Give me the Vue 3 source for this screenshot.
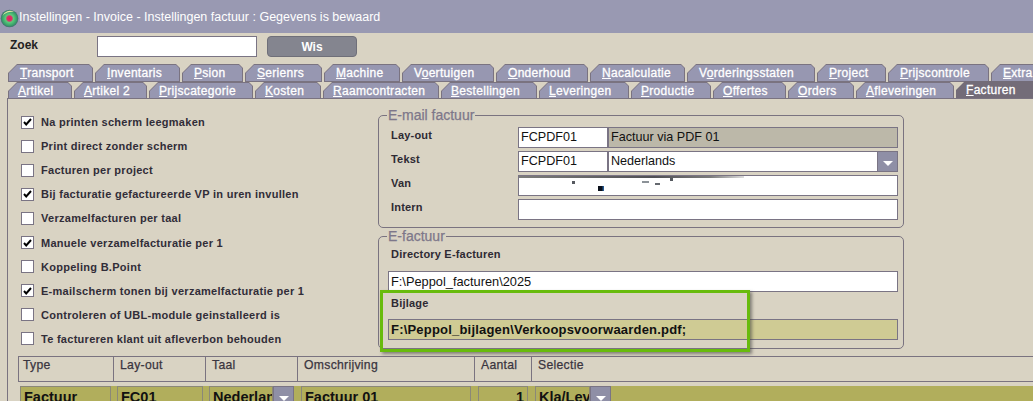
<script setup>
const row1 = [
  { k: 'T', t: 'ransport', w: 87 },
  { k: 'I', t: 'nventaris', w: 87 },
  { k: 'P', t: 'sion', w: 63 },
  { k: 'S', t: 'erienrs', w: 79 },
  { k: 'M', t: 'achine', w: 78 },
  { k: 'Vo', t: 'ertuigen', w: 94, u: 'second' },
  { k: 'O', t: 'nderhoud', w: 94 },
  { k: 'N', t: 'acalculatie', w: 97 },
  { k: 'Vo', t: 'rderingsstaten', w: 130, u: 'second' },
  { k: 'P', t: 'roject', w: 71 },
  { k: 'P', t: 'rijscontrole', w: 103 },
  { k: 'E', t: 'xtra', w: 50 }
]
const row2 = [
  { k: 'A', t: 'rtikel', w: 66 },
  { k: 'A', t: 'rtikel 2', w: 75 },
  { k: 'P', t: 'rijscategorie', w: 106 },
  { k: 'K', t: 'osten', w: 68 },
  { k: 'R', t: 'aamcontracten', w: 118 },
  { k: 'B', t: 'estellingen', w: 98 },
  { k: 'L', t: 'everingen', w: 92 },
  { k: 'P', t: 'roductie', w: 82 },
  { k: 'O', t: 'ffertes', w: 75 },
  { k: 'O', t: 'rders', w: 68 },
  { k: 'A', t: 'fleveringen', w: 100 },
  { k: 'F', t: 'acturen', w: 80, active: true }
]
const checks = [
  ['Na printen scherm leegmaken', true],
  ['Print direct zonder scherm', false],
  ['Facturen per project', false],
  ['Bij facturatie gefactureerde VP in uren invullen', true],
  ['Verzamelfacturen per taal', false],
  ['Manuele verzamelfacturatie per 1', true],
  ['Koppeling B.Point', false],
  ['E-mailscherm tonen bij verzamelfacturatie per 1', true],
  ['Controleren of UBL-module geinstalleerd is', false],
  ['Te factureren klant uit afleverbon behouden', false]
]
const columns = [
  ['Type', 95], ['Lay-out', 92], ['Taal', 92], ['Omschrijving', 177], ['Aantal', 57], ['Selectie', 502]
]
</script>

<template>
  <div class="screen">
    <header class="titlebar">
      <svg class="logo" width="19" height="19" viewBox="0 0 19 19">
        <defs>
          <radialGradient id="orb" cx="50%" cy="50%" r="52%">
            <stop offset="0" stop-color="#e81c58" />
            <stop offset=".28" stop-color="#dc2f68" />
            <stop offset=".42" stop-color="#5ecb7c" />
            <stop offset=".78" stop-color="#38a06a" />
            <stop offset="1" stop-color="#46606e" />
          </radialGradient>
        </defs>
        <circle cx="9.5" cy="9.5" r="8.8" fill="url(#orb)" />
        <path d="M2.5 7 A7.8 7.8 0 0 1 14 3 A10 7 0 0 0 2.5 7Z" fill="#e8e6a8" />
      </svg>
      <span class="title">Instellingen - Invoice - Instellingen factuur : Gegevens is bewaard</span>
    </header>

    <div class="search">
      <span class="search-label">Zoek</span>
      <input class="search-input" type="text" />
      <button class="wis">Wis</button>
    </div>

    <div class="tabs row-one">
      <div v-for="tab in row1" :key="tab.t" class="tab" :style="{ width: tab.w + 'px' }">
        <span v-if="tab.u" class="tab-text">{{ tab.k[0] }}<u>{{ tab.k[1] }}</u>{{ tab.t }}</span>
        <span v-else class="tab-text"><u>{{ tab.k }}</u>{{ tab.t }}</span>
      </div>
    </div>
    <div class="tabs row-two">
      <div v-for="tab in row2" :key="tab.t" class="tab" :class="{ active: tab.active }" :style="{ width: tab.w + 'px' }">
        <span class="tab-text"><u>{{ tab.k }}</u>{{ tab.t }}</span>
      </div>
    </div>

    <main class="panel">
      <div class="top-area">
        <ul class="checks">
          <li v-for="item in checks" :key="item[0]" class="check">
            <span class="box">
              <svg v-if="item[1]" width="9" height="8" viewBox="0 0 9 8">
                <path d="M1 4 L3.2 6.4 L8 1" fill="none" stroke="#000" stroke-width="2" />
              </svg>
            </span>
            <span>{{ item[0] }}</span>
          </li>
        </ul>

        <div class="groups">
          <fieldset class="group mail">
            <legend>E-mail factuur</legend>
            <div class="form-row">
              <label>Lay-out</label>
              <div class="field code">FCPDF01</div>
              <div class="field fill grey">Factuur via PDF 01</div>
            </div>
            <div class="form-row">
              <label>Tekst</label>
              <div class="field code">FCPDF01</div>
              <div class="field fill">Nederlands</div>
              <span class="arrow-btn"><i></i></span>
            </div>
            <div class="form-row">
              <label>Van</label>
              <div class="field fill smeared">
                <span class="smear"></span>
                <span class="spot spot-dark"></span>
                <span class="spot spot-a"></span>
                <span class="spot spot-b"></span>
                <span class="spot spot-c"></span>
                <span class="spot spot-d"></span>
              </div>
            </div>
            <div class="form-row">
              <label>Intern</label>
              <div class="field fill"></div>
            </div>
          </fieldset>

          <fieldset class="group efactuur">
            <legend>E-factuur</legend>
            <label class="stack-label first">Directory E-facturen</label>
            <div class="field wide">F:\Peppol_facturen\2025</div>
            <label class="stack-label second">Bijlage</label>
            <div class="field wide olive">F:\Peppol_bijlagen\Verkoopsvoorwaarden.pdf;</div>
            <div class="highlight"></div>
          </fieldset>
        </div>
      </div>

      <div class="grid-head">
        <div v-for="col in columns" :key="col[0]" class="head-cell" :style="{ width: col[1] + 'px' }">{{ col[0] }}</div>
      </div>
      <div class="grid-row">
        <div class="cell c-type">Factuur</div>
        <div class="cell c-layout">FC01</div>
        <div class="combo c-taal"><div class="cell">Nederlands</div><span class="arrow-btn"><i></i></span></div>
        <div class="cell c-desc">Factuur 01</div>
        <div class="cell c-num">1</div>
        <div class="combo c-sel"><div class="cell">Kla/Lev</div><span class="arrow-btn"><i></i></span></div>
      </div>
    </main>
  </div>
</template>

<style>
html, body { margin: 0; overflow: hidden; background: #d9d3c3; }
</style>

<style scoped>
.screen {
  width: 1033px;
  height: 401px;
  overflow: hidden;
  background: #d9d3c3;
  font-family: "Liberation Sans", Arial, sans-serif;
  color: #2e2a33;
  position: relative;
}
.titlebar {
  height: 33px;
  background: #9999b2;
  display: flex;
  align-items: center;
  box-sizing: border-box;
}
.logo { flex: none; margin-top: 3px; }
.title { color: #fff; font-size: 12.5px; }
.search {
  height: 31px;
  display: flex;
  align-items: flex-start;
  box-sizing: border-box;
  padding: 3px 0 0 10px;
}
.search-label { width: 87px; font-size: 12px; font-weight: bold; line-height: 19px; color: #222; }
.search-input {
  width: 160px;
  height: 21px;
  box-sizing: border-box;
  border: 1px solid #7a7484;
  background: #fff;
  padding: 0;
  margin: 0;
  outline: none;
}
.wis {
  width: 90px;
  height: 21px;
  margin-left: 10px;
  border: 1px solid #6f6f79;
  border-radius: 4px;
  background: #84858f;
  color: #fff;
  font: bold 12px "Liberation Sans", Arial, sans-serif;
  padding: 0;
}
.tabs { display: flex; padding-left: 8px; }
.row-one { height: 18px; }
.row-two { height: 16px; }
.tab {
  position: relative;
  flex: none;
  box-sizing: border-box;
  height: 18px;
  padding-left: 12px;
  background: #7a7380;
  color: #fff;
  font-size: 12px;
  letter-spacing: .3px;
  -webkit-text-stroke: .3px #fff;
  line-height: 19px;
  white-space: nowrap;
  clip-path: polygon(9px 0, calc(100% - 6px) 0, calc(100% - 2px) 4px, calc(100% - 2px) 100%, 0 100%, 0 9px);
}
.tab::before {
  content: "";
  position: absolute;
  inset: 1px 3px 1px 1px;
  background: #9797b1;
  clip-path: polygon(8px 0, calc(100% - 3px) 0, 100% 3px, 100% 100%, 0 100%, 0 8px);
}
.tab-text { position: relative; }
.row-two .tab { height: 16px; line-height: 19px; padding-left: 10px; }
.row-two .tab::before { inset: 1px 3px 0 1px; }
.row-two .tab.active {
  background: #736c78;
  margin-top: -1px;
  height: 17px;
  line-height: 18px;
  clip-path: polygon(9px 0, 100% 0, 100% 100%, 0 100%, 0 9px);
}
.tab.active::before { background: #736c78; }
.panel {
  margin-left: 7px;
  border-left: 1px solid #7a7380;
  border-top: 1px solid #7a7380;
  height: 303px;
  box-sizing: border-box;
}
.top-area { display: flex; height: 257px; }
.checks {
  list-style: none;
  margin: 0;
  padding: 11px 0 0 13px;
  width: 370px;
  box-sizing: border-box;
  flex: none;
}
.check {
  height: 24.1px;
  display: flex;
  align-items: center;
  font-size: 11px;
  font-weight: bold;
  letter-spacing: .28px;
  color: #312d38;
}
.box {
  width: 13px;
  height: 13px;
  flex: none;
  box-sizing: border-box;
  border: 1px solid #7a7484;
  background: #fff;
  margin-right: 7px;
  display: flex;
  align-items: center;
  justify-content: center;
}
.groups { width: 526px; padding-top: 9px; flex: none; }
.group {
  margin: 0;
  padding: 0;
  border: 1px solid #7a7380;
  border-radius: 5px;
  height: 120px;
  box-sizing: border-box;
  position: relative;
  min-width: 0;
}
.group legend {
  padding: 0 1px;
  font-size: 14px;
  line-height: 14px;
  font-weight: normal;
  color: #7d778a;
  -webkit-text-stroke: .25px #7d778a;
}
.mail { margin-bottom: 1px; }
.mail legend { margin-left: 8px; }
.efactuur legend { margin-left: -1px; }
.form-row {
  display: flex;
  height: 21px;
  margin: 0 5px 3px 12px;
}
.form-row:first-of-type { margin-top: 5px; }
.form-row label { width: 127px; flex: none; font-size: 11px; font-weight: bold; letter-spacing: .2px; line-height: 17px; color: #2e2a33; }
.field {
  box-sizing: border-box;
  height: 21px;
  border: 1px solid #7a7484;
  background: #fff;
  font-size: 12.6px;
  line-height: 19px;
  padding-left: 2px;
  color: #111;
  white-space: nowrap;
  overflow: hidden;
}
.code { width: 90px; flex: none; }
.fill { flex: 1; min-width: 0; }
.grey { background: #bcb8a9; }
.smeared { position: relative; }
.smear {
  position: absolute;
  left: 0;
  top: 0;
  width: 225px;
  height: 2px;
  background: linear-gradient(90deg, #7c7c7a, #4f4f54 60%, #7a7a7a 85%, #ddd 100%);
  filter: blur(.5px);
}
.spot { position: absolute; background: #8c9298; filter: blur(.6px); }
.spot-dark { left: 79px; top: 10px; width: 6px; height: 5px; background: linear-gradient(90deg, #0a0f1a 60%, #2a6cb0); }
.spot-a { left: 53px; top: 5px; width: 3px; height: 3px; background: #55595f; }
.spot-b { left: 123px; top: 5px; width: 7px; height: 2px; }
.spot-c { left: 136px; top: 7px; width: 5px; height: 2px; background: #65696f; }
.spot-d { left: 151px; top: 2px; width: 3px; height: 3px; background: #55595f; }
.arrow-btn {
  width: 21px;
  height: 21px;
  flex: none;
  box-sizing: border-box;
  border: 1px solid #7a7484;
  background: #8f8fa6;
  display: flex;
  align-items: center;
  justify-content: center;
}
.arrow-btn i {
  width: 0;
  height: 0;
  border-left: 5px solid transparent;
  border-right: 5px solid transparent;
  border-top: 5px solid #fff;
  margin-top: 3px;
}
.form-row .arrow-btn { margin-left: -1px; }
.efactuur { padding: 0 5px 0 9px; }
.stack-label { display: block; font-size: 11px; font-weight: bold; letter-spacing: .2px; line-height: 13px; color: #2e2a33; padding-left: 3px; }
.stack-label.first { margin-top: 5px; margin-bottom: 10px; }
.stack-label.second { margin-top: 5px; margin-bottom: 9px; }
.wide { width: 510px; font-size: 12.8px; }
.olive { background: #cfcb94; font-size: 13px; font-weight: bold; letter-spacing: .2px; color: #111; }
.highlight {
  position: absolute;
  left: 1px;
  top: 47px;
  width: 370px;
  height: 62px;
  box-sizing: border-box;
  border: 3px solid #68bb0c;
  box-shadow: 2px 2px 3px rgba(60, 60, 60, .55);
}
.grid-head {
  display: flex;
  height: 26px;
  margin-left: 10px;
  box-sizing: border-box;
  border-top: 1px solid #7a7380;
  border-bottom: 1px solid #7a7380;
}
.head-cell {
  box-sizing: border-box;
  border-left: 1px solid #7a7380;
  font-size: 12.2px;
  -webkit-text-stroke: .25px #3a3540;
  padding: 1px 0 0 6px;
  letter-spacing: .3px;
  color: #3a3540;
  flex: none;
}
.head-cell:first-child { padding-left: 4px; }
.grid-row {
  display: flex;
  margin: 4px 0 0 12px;
  height: 21px;
  align-items: flex-start;
  background: #b1ae5c;
}
.cell {
  box-sizing: border-box;
  height: 21px;
  background: #b1ae5c;
  border: 1px solid #8b8878;
  border-bottom: 0;
  font-size: 14.5px;
  font-weight: bold;
  line-height: 20px;
  padding-left: 3px;
  color: #111;
  overflow: hidden;
  white-space: nowrap;
  flex: none;
}
.combo { display: flex; flex: none; }
.c-type { width: 91px; margin-right: 6px; }
.c-layout { width: 86px; margin-right: 6px; }
.c-taal { width: 85px; margin-right: 7px; }
.c-taal .cell { width: 64px; }
.c-desc { width: 170px; margin-right: 7px; }
.c-num { width: 50px; margin-right: 7px; text-align: right; padding-right: 3px; }
.c-sel { width: 76px; }
.c-sel .cell { width: 55px; }
</style>
